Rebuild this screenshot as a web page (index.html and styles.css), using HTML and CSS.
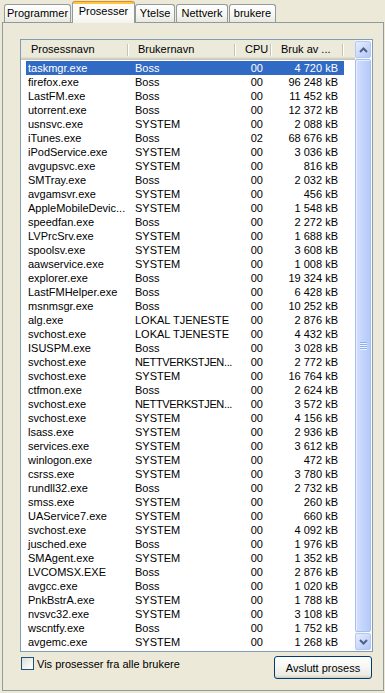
FILE: index.html
```html
<!DOCTYPE html>
<html>
<head>
<meta charset="utf-8">
<link rel="stylesheet" href="styles.css">
</head>
<body>
<div class="tabs">
  <div class="tab t-prog">Programmer</div>
  <div class="tab tab-sel">Prosesser</div>
  <div class="tab t-ytel">Ytelse</div>
  <div class="tab t-nett">Nettverk</div>
  <div class="tab t-bruk">brukere</div>
</div>
<div class="panel">
  <div class="lv">
    <div class="lv-main">
      <div class="hdr">
        <div class="hc hc-first">Prosessnavn</div>
        <div class="hc">Brukernavn</div>
        <div class="hc">CPU</div>
        <div class="hc">Bruk av ...</div>
        <div class="hc hc-fill"></div>
      </div>
      <div class="rows">
        <div class="row sel"><span class="c-name">taskmgr.exe</span><span class="c-user">Boss</span><span class="c-cpu">00</span><span class="c-mem">4 720 kB</span></div>
        <div class="row"><span class="c-name">firefox.exe</span><span class="c-user">Boss</span><span class="c-cpu">00</span><span class="c-mem">96 248 kB</span></div>
        <div class="row"><span class="c-name">LastFM.exe</span><span class="c-user">Boss</span><span class="c-cpu">00</span><span class="c-mem">11 452 kB</span></div>
        <div class="row"><span class="c-name">utorrent.exe</span><span class="c-user">Boss</span><span class="c-cpu">00</span><span class="c-mem">12 372 kB</span></div>
        <div class="row"><span class="c-name">usnsvc.exe</span><span class="c-user">SYSTEM</span><span class="c-cpu">00</span><span class="c-mem">2 088 kB</span></div>
        <div class="row"><span class="c-name">iTunes.exe</span><span class="c-user">Boss</span><span class="c-cpu">02</span><span class="c-mem">68 676 kB</span></div>
        <div class="row"><span class="c-name">iPodService.exe</span><span class="c-user">SYSTEM</span><span class="c-cpu">00</span><span class="c-mem">3 036 kB</span></div>
        <div class="row"><span class="c-name">avgupsvc.exe</span><span class="c-user">SYSTEM</span><span class="c-cpu">00</span><span class="c-mem">816 kB</span></div>
        <div class="row"><span class="c-name">SMTray.exe</span><span class="c-user">Boss</span><span class="c-cpu">00</span><span class="c-mem">2 032 kB</span></div>
        <div class="row"><span class="c-name">avgamsvr.exe</span><span class="c-user">SYSTEM</span><span class="c-cpu">00</span><span class="c-mem">456 kB</span></div>
        <div class="row"><span class="c-name">AppleMobileDevic...</span><span class="c-user">SYSTEM</span><span class="c-cpu">00</span><span class="c-mem">1 548 kB</span></div>
        <div class="row"><span class="c-name">speedfan.exe</span><span class="c-user">Boss</span><span class="c-cpu">00</span><span class="c-mem">2 272 kB</span></div>
        <div class="row"><span class="c-name">LVPrcSrv.exe</span><span class="c-user">SYSTEM</span><span class="c-cpu">00</span><span class="c-mem">1 688 kB</span></div>
        <div class="row"><span class="c-name">spoolsv.exe</span><span class="c-user">SYSTEM</span><span class="c-cpu">00</span><span class="c-mem">3 608 kB</span></div>
        <div class="row"><span class="c-name">aawservice.exe</span><span class="c-user">SYSTEM</span><span class="c-cpu">00</span><span class="c-mem">1 008 kB</span></div>
        <div class="row"><span class="c-name">explorer.exe</span><span class="c-user">Boss</span><span class="c-cpu">00</span><span class="c-mem">19 324 kB</span></div>
        <div class="row"><span class="c-name">LastFMHelper.exe</span><span class="c-user">Boss</span><span class="c-cpu">00</span><span class="c-mem">6 428 kB</span></div>
        <div class="row"><span class="c-name">msnmsgr.exe</span><span class="c-user">Boss</span><span class="c-cpu">00</span><span class="c-mem">10 252 kB</span></div>
        <div class="row"><span class="c-name">alg.exe</span><span class="c-user">LOKAL TJENESTE</span><span class="c-cpu">00</span><span class="c-mem">2 876 kB</span></div>
        <div class="row"><span class="c-name">svchost.exe</span><span class="c-user">LOKAL TJENESTE</span><span class="c-cpu">00</span><span class="c-mem">4 432 kB</span></div>
        <div class="row"><span class="c-name">ISUSPM.exe</span><span class="c-user">Boss</span><span class="c-cpu">00</span><span class="c-mem">3 028 kB</span></div>
        <div class="row"><span class="c-name">svchost.exe</span><span class="c-user tight">NETTVERKSTJEN...</span><span class="c-cpu">00</span><span class="c-mem">2 772 kB</span></div>
        <div class="row"><span class="c-name">svchost.exe</span><span class="c-user">SYSTEM</span><span class="c-cpu">00</span><span class="c-mem">16 764 kB</span></div>
        <div class="row"><span class="c-name">ctfmon.exe</span><span class="c-user">Boss</span><span class="c-cpu">00</span><span class="c-mem">2 624 kB</span></div>
        <div class="row"><span class="c-name">svchost.exe</span><span class="c-user tight">NETTVERKSTJEN...</span><span class="c-cpu">00</span><span class="c-mem">3 572 kB</span></div>
        <div class="row"><span class="c-name">svchost.exe</span><span class="c-user">SYSTEM</span><span class="c-cpu">00</span><span class="c-mem">4 156 kB</span></div>
        <div class="row"><span class="c-name">lsass.exe</span><span class="c-user">SYSTEM</span><span class="c-cpu">00</span><span class="c-mem">2 936 kB</span></div>
        <div class="row"><span class="c-name">services.exe</span><span class="c-user">SYSTEM</span><span class="c-cpu">00</span><span class="c-mem">3 612 kB</span></div>
        <div class="row"><span class="c-name">winlogon.exe</span><span class="c-user">SYSTEM</span><span class="c-cpu">00</span><span class="c-mem">472 kB</span></div>
        <div class="row"><span class="c-name">csrss.exe</span><span class="c-user">SYSTEM</span><span class="c-cpu">00</span><span class="c-mem">3 780 kB</span></div>
        <div class="row"><span class="c-name">rundll32.exe</span><span class="c-user">Boss</span><span class="c-cpu">00</span><span class="c-mem">2 732 kB</span></div>
        <div class="row"><span class="c-name">smss.exe</span><span class="c-user">SYSTEM</span><span class="c-cpu">00</span><span class="c-mem">260 kB</span></div>
        <div class="row"><span class="c-name">UAService7.exe</span><span class="c-user">SYSTEM</span><span class="c-cpu">00</span><span class="c-mem">660 kB</span></div>
        <div class="row"><span class="c-name">svchost.exe</span><span class="c-user">SYSTEM</span><span class="c-cpu">00</span><span class="c-mem">4 092 kB</span></div>
        <div class="row"><span class="c-name">jusched.exe</span><span class="c-user">Boss</span><span class="c-cpu">00</span><span class="c-mem">1 976 kB</span></div>
        <div class="row"><span class="c-name">SMAgent.exe</span><span class="c-user">SYSTEM</span><span class="c-cpu">00</span><span class="c-mem">1 352 kB</span></div>
        <div class="row"><span class="c-name">LVCOMSX.EXE</span><span class="c-user">Boss</span><span class="c-cpu">00</span><span class="c-mem">2 876 kB</span></div>
        <div class="row"><span class="c-name">avgcc.exe</span><span class="c-user">Boss</span><span class="c-cpu">00</span><span class="c-mem">1 020 kB</span></div>
        <div class="row"><span class="c-name">PnkBstrA.exe</span><span class="c-user">SYSTEM</span><span class="c-cpu">00</span><span class="c-mem">1 788 kB</span></div>
        <div class="row"><span class="c-name">nvsvc32.exe</span><span class="c-user">SYSTEM</span><span class="c-cpu">00</span><span class="c-mem">3 108 kB</span></div>
        <div class="row"><span class="c-name">wscntfy.exe</span><span class="c-user">Boss</span><span class="c-cpu">00</span><span class="c-mem">1 752 kB</span></div>
        <div class="row"><span class="c-name">avgemc.exe</span><span class="c-user">SYSTEM</span><span class="c-cpu">00</span><span class="c-mem">1 268 kB</span></div>
      </div>
    </div>
    <div class="sb">
      <div class="sb-btn">
        <svg width="9" height="6" viewBox="0 0 9 6"><path d="M1 5 L4.5 1.5 L8 5" fill="none" stroke="#4D6185" stroke-width="2"/></svg>
      </div>
      <div class="sb-thumb">
        <div class="grip"><i></i><i></i><i></i><i></i></div>
      </div>
      <div class="sb-btn">
        <svg width="9" height="6" viewBox="0 0 9 6"><path d="M1 1 L4.5 4.5 L8 1" fill="none" stroke="#4D6185" stroke-width="2"/></svg>
      </div>
    </div>
  </div>
  <div class="bottom">
    <label class="chk"><span class="box"></span><span>Vis prosesser fra alle brukere</span></label>
    <button class="btn">Avslutt prosess</button>
  </div>
</div>
</body>
</html>
```
FILE: styles.css
```css
html, body {
  margin: 0;
  padding: 0;
}
body {
  width: 385px;
  height: 693px;
  background: #ECE9D8;
  font-family: "Liberation Sans", Arial, sans-serif;
  font-size: 11px;
  color: #000;
  overflow: hidden;
  display: flex;
  flex-direction: column;
}

/* Tabs */
.tabs {
  height: 22px;
  display: flex;
  align-items: flex-end;
  padding-left: 4px;
  flex-shrink: 0;
}
.tab {
  box-sizing: border-box;
  height: 18px;
  border: 1px solid #919B9C;
  border-bottom: none;
  border-radius: 3px 3px 0 0;
  background: linear-gradient(#FEFEFE, #F6F5F0 60%, #E8E7E0);
  display: flex;
  align-items: center;
  justify-content: center;
  padding-bottom: 1px;
  white-space: nowrap;
}
.t-prog { width: 67px; margin-right: 1px; }
.tab-sel {
  width: 63px;
  height: 22px;
  margin-bottom: -1px;
  position: relative;
  z-index: 1;
  border-top: 1px solid #E68B2C;
  background: linear-gradient(#FFC83C 0, #FFC83C 2px, #FCFCFE 2px, #FAFAF8 70%, #F4F3EE);
  padding-bottom: 3px;
}
.t-ytel { width: 40px; margin-right: 1px; }
.t-nett { width: 52px; margin-right: 1px; }
.t-bruk { width: 47px; }

/* Panel */
.panel {
  flex: 1;
  margin: 0 1px 2px 2px;
  border: 1px solid #919B9C;
  padding: 16px 10px 0 17px;
  display: flex;
  flex-direction: column;
}

/* List view */
.lv {
  box-sizing: border-box;
  height: 613px;
  border: 1px solid #7F9DB9;
  background: #FFFFFF;
  display: flex;
}
.lv-main {
  flex: 1;
  overflow: hidden;
}
.hdr {
  display: grid;
  grid-template-columns: 108px 107px 36px 72px 1fr;
  height: 20px;
  background: #EBEADB;
  box-shadow: inset 0 -1px #CBC7B8, inset 0 -2px #D6D2C2, inset 0 -3px #E2DECD;
}
.hc {
  padding-left: 9px;
  line-height: 18px;
  white-space: nowrap;
  overflow: hidden;
  background:
    linear-gradient(#C7C5B2, #C7C5B2) no-repeat right 1px top 4px / 1px 12px,
    linear-gradient(#FFFFFF, #FFFFFF) no-repeat right 0 top 4px / 1px 12px;
}
.hc-first { padding-left: 10px; }
.hc-fill { background: none; }

.rows {
  padding-top: 1px;
}
.row {
  display: grid;
  grid-template-columns: 103px 107px 36px 72px;
  margin-left: 5px;
  width: 318px;
  height: 14px;
  line-height: 14px;
  white-space: nowrap;
}
.row.sel {
  background: #316AC5;
  color: #FFFFFF;
}
.c-name { padding-left: 2px; overflow: hidden; }
.c-user { padding-left: 6px; overflow: hidden; }
.c-user.tight { letter-spacing: -0.35px; }
.c-cpu { text-align: right; padding-right: 9px; }
.c-mem { text-align: right; padding-right: 6px; }

/* Scrollbar */
.sb {
  width: 17px;
  flex-shrink: 0;
  background: linear-gradient(to right, #F3F1EC, #FEFEFB);
  display: flex;
  flex-direction: column;
  padding: 1px 1px 1px 0;
  box-sizing: border-box;
}
.sb-btn {
  box-sizing: border-box;
  height: 17px;
  border: 1px solid #B5C8F3;
  border-radius: 2px;
  background: linear-gradient(135deg, #E6EEFE, #C7D6FB 60%, #B4C7F5);
  display: flex;
  align-items: center;
  justify-content: center;
  flex-shrink: 0;
}
.sb-thumb {
  flex: 1;
  margin: 1px 0;
  box-sizing: border-box;
  border: 1px solid #A7BEF2;
  border-radius: 2px;
  background: linear-gradient(to right, #D3E0FD, #C3D4FC 50%, #B6CAF8);
  box-shadow: inset 1px 1px #E6EEFF;
  display: flex;
  align-items: center;
  justify-content: center;
}
.grip {
  display: flex;
  flex-direction: column;
  gap: 1px;
}
.grip i {
  display: block;
  width: 7px;
  height: 1px;
  background: #8CAEF4;
  box-shadow: 0 1px #EEF4FE;
}

/* Bottom row */
.bottom {
  display: flex;
  justify-content: space-between;
  align-items: flex-start;
  margin-top: 4px;
}
.chk {
  display: flex;
  align-items: center;
  margin-top: 1px;
  margin-left: 1px;
}
.box {
  box-sizing: border-box;
  width: 13px;
  height: 13px;
  border: 1px solid #1C5180;
  background: linear-gradient(135deg, #DCDCD7, #F7F7F5 70%, #FFFFFF);
  margin-right: 3px;
}
.btn {
  box-sizing: border-box;
  width: 98px;
  height: 23px;
  margin: 0 1px 0 0;
  padding: 0;
  border: 1px solid #003C74;
  border-radius: 3px;
  background: linear-gradient(#FFFFFF, #F5F5F1 50%, #ECEBE5 85%, #D6D0C5);
  box-shadow: inset 0 -1px #D6D0C5;
  font-family: "Liberation Sans", Arial, sans-serif;
  font-size: 11px;
  color: #000;
}
```
